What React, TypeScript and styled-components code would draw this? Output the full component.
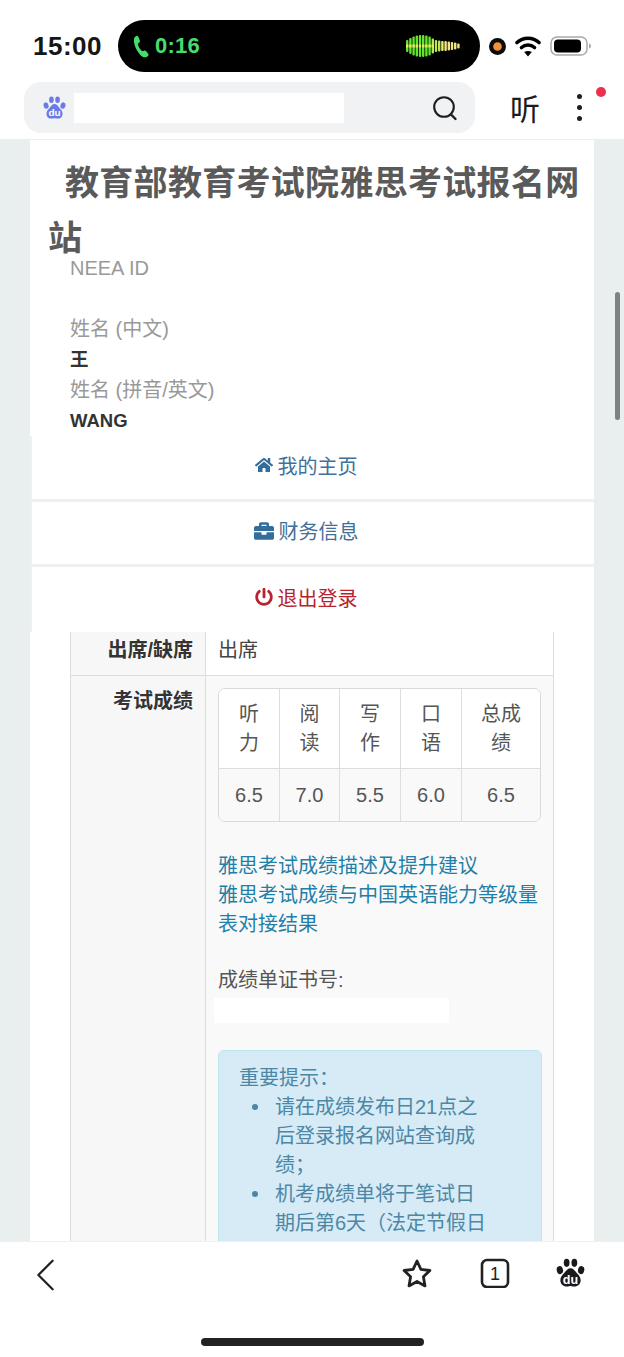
import React from "react";
import styled, { createGlobalStyle } from "styled-components";
import { FaBriefcase, FaHome, FaPowerOff } from "react-icons/fa";

const Global = createGlobalStyle`
  html, body { margin: 0; padding: 0; background: #fff; }
  * { box-sizing: border-box; }
  body { font-family: "Liberation Sans", "Noto Sans CJK SC", sans-serif; }
`;

const Phone = styled.div`
  position: relative;
  width: 624px;
  height: 1357px;
  display: flex;
  flex-direction: column;
  overflow: hidden;
  background: #fff;
`;

const StatusBar = styled.div`
  height: 82px;
  flex: none;
  display: flex;
  align-items: flex-start;
  padding: 20px 0 0 33px;
`;
const Clock = styled.div`
  width: 85px;
  height: 52px;
  line-height: 52px;
  font-size: 26px;
  font-weight: 700;
  color: #161616;
  letter-spacing: 0.5px;
`;
const Island = styled.div`
  width: 362px;
  height: 52px;
  border-radius: 26px;
  background: #000;
  display: flex;
  align-items: center;
  padding: 0 19px 0 15px;
  gap: 2px;
`;
const CallTime = styled.span`
  flex: 1;
  color: #46dd6c;
  font-size: 22px;
  font-weight: 700;
  letter-spacing: 0.2px;
`;
const StatusIcons = styled.div`
  height: 52px;
  display: flex;
  align-items: center;
  margin-left: 9px;
  gap: 9px;
`;

const Toolbar = styled.div`
  height: 57px;
  flex: none;
  display: flex;
  position: relative;
  padding: 0 0 6px 24px;
`;
const SearchBar = styled.div`
  width: 451px;
  height: 51px;
  border-radius: 17px;
  background: #f1f2f4;
  display: flex;
  align-items: center;
  padding: 0 17px 0 19px;
`;
const UrlMask = styled.div`
  width: 270px;
  height: 30px;
  margin-left: 8px;
  margin-right: auto;
  background: #fff;
`;
const Listen = styled.div`
  margin-left: 33px;
  width: 34px;
  height: 51px;
  padding-top: 2px;
  line-height: 51px;
  font-size: 30px;
  color: #1c1c1c;
  text-align: center;
`;
const Dots = styled.div`
  margin-left: 35px;
  height: 51px;
  display: flex;
  flex-direction: column;
  justify-content: center;
  gap: 6px;
`;
const Dot = styled.span`
  width: 5px;
  height: 5px;
  border-radius: 50%;
  background: #1f1f1f;
`;
const RedDot = styled.span`
  position: absolute;
  left: 596px;
  top: 5px;
  width: 10px;
  height: 10px;
  border-radius: 50%;
  background: #ee2f4c;
`;

const Viewport = styled.div`
  flex: 1;
  min-height: 0;
  overflow: hidden;
  background: #e8efee;
  padding: 1px 30px 0;
`;
const Card = styled.div`
  width: 564px;
  background: #fff;
`;
const Heading = styled.h1`
  margin: 0 0 -13px;
  padding: 16px 12px 0 18px;
  text-indent: 17px;
  font-size: 34px;
  line-height: 55px;
  letter-spacing: 0.3px;
  font-weight: 700;
  color: #5a5a5a;
`;
const Info = styled.div`
  padding-left: 40px;
  position: relative;
`;
const Label = styled.div`
  height: 30px;
  line-height: 30px;
  font-size: 20px;
  color: #999;
`;
const Value = styled.div`
  height: 31px;
  line-height: 31px;
  font-size: 18.5px;
  font-weight: 700;
  color: #333;
`;

const NavGroup = styled.div`
  display: flex;
  flex-direction: column;
  gap: 3px;
  padding-left: 2px;
  background: #eef1f2;
`;
const NavItem = styled.a<{ $tone: string; $h: number }>`
  height: ${(p) => p.$h}px;
  background: #fff;
  display: flex;
  align-items: center;
  justify-content: center;
  gap: 5px;
  padding: 0 14px 5px 0;
  font-size: 20px;
  color: ${(p) => p.$tone};
`;

const TableWrap = styled.div`
  padding: 0 40px;
`;
const Row = styled.div`
  display: flex;
  border: 1px solid #ddd;
  border-top: none;
`;
const RowHead = styled.div<{ $pad: number }>`
  width: 135px;
  flex: none;
  background: #f7f7f7;
  border-right: 1px solid #ddd;
  padding: ${(p) => p.$pad}px 12px 10px 0;
  text-align: right;
  font-size: 20px;
  line-height: 29px;
  font-weight: 700;
  color: #333;
`;
const RowBody = styled.div<{ $pad: number; $bg: string }>`
  flex: 1;
  min-width: 0;
  background: ${(p) => p.$bg};
  padding: ${(p) => p.$pad}px 11px 0 12px;
  font-size: 20px;
  line-height: 29px;
  color: #444;
`;

const ScoreTable = styled.table`
  width: 323px;
  border-collapse: separate;
  border-spacing: 0;
  table-layout: fixed;
  font-size: 20px;
  line-height: 29px;
  color: #555;
  border: 1px solid #d9d9d9;
  border-radius: 7px;
  overflow: hidden;
`;
const HeadCell = styled.th<{ $w: number }>`
  width: ${(p) => p.$w}px;
  height: 80px;
  font-weight: 400;
  text-align: center;
  background: #fff;
  border-right: 1px solid #ddd;
  border-bottom: 1px solid #ddd;
  padding: 0;
  &:last-child { border-right: none; }
`;
const ScoreCell = styled.td`
  height: 52px;
  text-align: center;
  background: #f9f9f9;
  border-right: 1px solid #ddd;
  padding: 0;
  &:last-child { border-right: none; }
`;
const Links = styled.div`
  margin-top: 30px;
  color: #1f7fa8;
`;
const CertLabel = styled.div`
  margin-top: 27px;
  color: #555;
`;
const CertMask = styled.div`
  width: 235px;
  height: 25px;
  margin: 3px 0 0 -4px;
  background: #fff;
`;
const Alert = styled.div`
  margin-top: 27px;
  width: 324px;
  background: #d6ebf5;
  border: 1px solid #bfe3ef;
  border-radius: 6px;
  padding: 12px 20px 20px;
  color: #4d87a6;
  font-size: 20px;
`;
const AlertTitle = styled.div`
  padding-top: 1px;
`;
const Bullets = styled.ul`
  margin: 0;
  padding: 0 0 0 36px;
  max-width: 251px;
  list-style: none;
`;
const Bullet = styled.li`
  position: relative;
  &::before {
    content: "";
    position: absolute;
    left: -23px;
    top: 11px;
    width: 6px;
    height: 6px;
    border-radius: 50%;
    background: #4d87a6;
  }
`;

const ScrollThumb = styled.div`
  position: absolute;
  left: 615px;
  top: 292px;
  width: 5px;
  height: 128px;
  border-radius: 3px;
  background: #7d8384;
`;

const BottomBar = styled.div`
  height: 116px;
  flex: none;
  background: #fff;
  border-top: 1px solid #f0f0f0;
  display: flex;
  flex-direction: column;
`;
const BottomIcons = styled.div`
  display: flex;
  align-items: flex-start;
  padding: 16px 39px 0 36px;
  height: 96px;
`;
const IconSlot = styled.div<{ $ml: number }>`
  margin-left: ${(p) => p.$ml}px;
  display: flex;
`;
const HomeBar = styled.div`
  width: 223px;
  height: 8px;
  margin: 0 auto;
  border-radius: 4px;
  background: #222;
`;

function BaiduPaw({ color, textColor, size }: { color: string; textColor: string; size: number }) {
  return (
    <svg width={size} height={size} viewBox="0 0 30 30" aria-hidden="true">
      <ellipse cx="11" cy="5" rx="3" ry="4.2" fill={color} />
      <ellipse cx="19" cy="5" rx="3" ry="4.2" fill={color} />
      <ellipse cx="4" cy="12.500" rx="3.200" ry="4.200" fill={color} transform="rotate(-15 4 12.500)" />
      <ellipse cx="26" cy="12.500" rx="3.200" ry="4.200" fill={color} transform="rotate(15 26 12.500)" />
      <path
        d="M15 10.500c3 0 4.500 2.500 6.500 5 2 2.300 4 4 4 7.500 0 4-3 6.500-6.500 6.500-1.800 0-3.500-.6-4-.6s-2.200.6-4 .6c-3.500 0-6.500-2.500-6.500-6.500 0-3.500 2-5.200 4-7.500 2-2.500 3.500-5 6.500-5z"
        fill={color}
      />
      <text x="15" y="26.500" textAnchor="middle" fontSize="13" fontWeight="700" fontFamily="Liberation Sans, sans-serif" fill={textColor}>
        du
      </text>
    </svg>
  );
}

function PhoneGlyph() {
  return (
    <svg width="20" height="24" viewBox="0 0 20 24" aria-hidden="true">
      <path
        d="M1.500 3.500C2.700 1.800 4.800 1.500 5.500 3l1.300 3.500c.4 1-.2 1.800-1 2.400l-.9.700c-.2 2 2.500 6.800 4.600 7.600l1.200-.5c1-.4 1.900-.3 2.500.5l2 2.600c.8 1.200 0 2.500-1.600 3.200-3 1.200-6-1-8.500-5C1.800 13.500-.2 7 1.500 3.500z"
        fill="#46dd6c"
      />
    </svg>
  );
}

const waveHeights = [12, 16, 19, 21, 22, 22, 21, 19, 15, 12, 11, 10, 10, 9, 8, 7, 5];
function Wave() {
  return (
    <svg width="56" height="26" viewBox="0 0 56 26" aria-hidden="true">
      {waveHeights.map((h, i) => (
        <g key={i}>
          <rect
            x={1 + i * 3.2}
            y={13 - h / 2}
            width="2.400"
            height={h}
            rx="1"
            fill={i < 8 ? "#63e52c" : i < 11 ? "#b8ea4e" : "#f2e67e"}
          />
          {i < 9 && <rect x={1 + i * 3.2} y={11.500} width="2.400" height="3" fill="#e4ee5c" />}
        </g>
      ))}
    </svg>
  );
}

function RecordDot() {
  return (
    <svg width="17" height="17" viewBox="0 0 17 17" aria-hidden="true">
      <circle cx="8.500" cy="8.500" r="8.500" fill="#0b0b0b" />
      <circle cx="8.500" cy="8.500" r="4.300" fill="#f0913a" />
    </svg>
  );
}

function Wifi() {
  return (
    <svg width="26" height="22" viewBox="0 0 26 22" aria-hidden="true">
      <path d="M2 7.500C8 1.800 18 1.800 24 7.500" fill="none" stroke="#000" strokeWidth="3.600" strokeLinecap="round" />
      <path d="M6.500 12.500c3.800-3.300 9.200-3.300 13 0" fill="none" stroke="#000" strokeWidth="3.600" strokeLinecap="round" />
      <path d="M13 21.500l-3.800-4.400c2.200-1.500 5.400-1.500 7.600 0z" fill="#000" />
    </svg>
  );
}

function Battery() {
  return (
    <svg width="42" height="20" viewBox="0 0 42 20" aria-hidden="true">
      <rect x="1" y="1" width="36" height="18" rx="6" fill="#fff" stroke="#a9a9a9" strokeWidth="1.500" />
      <rect x="4" y="3.500" width="27" height="13" rx="4" fill="#000" />
      <path d="M39 7.500c1.500.4 2 1.300 2 2.500s-.5 2.100-2 2.500z" fill="#a9a9a9" />
    </svg>
  );
}

function Magnifier() {
  return (
    <svg width="26" height="26" viewBox="0 0 26 26" aria-hidden="true">
      <circle cx="12" cy="12" r="9.800" fill="none" stroke="#1e1e1e" strokeWidth="2.100" />
      <path d="M19 19.500l4.500 4.500" stroke="#1e1e1e" strokeWidth="2.400" strokeLinecap="round" />
    </svg>
  );
}

function BackChevron() {
  return (
    <svg width="20" height="34" viewBox="0 0 20 34" aria-hidden="true">
      <path d="M17.500 2L2.500 17l15 15" fill="none" stroke="#222" strokeWidth="2.400" strokeLinecap="round" strokeLinejoin="round" />
    </svg>
  );
}

function StarOutline() {
  return (
    <svg width="32" height="32" viewBox="0 0 32 32" aria-hidden="true">
      <path
        d="M16 3l3.900 8.300 9 1.200-6.500 6.300 1.600 9.100-8-4.400-8 4.400 1.600-9.100L3.100 12.500l9-1.200z"
        fill="none"
        stroke="#222"
        strokeWidth="2.800"
        strokeLinejoin="round"
      />
    </svg>
  );
}

function TabCount() {
  return (
    <svg width="30" height="30" viewBox="0 0 30 30" aria-hidden="true">
      <rect x="2" y="2" width="26" height="27" rx="5" fill="none" stroke="#222" strokeWidth="2.600" />
      <text x="15" y="22" textAnchor="middle" fontSize="18" fontFamily="Liberation Sans, sans-serif" fill="#222">
        1
      </text>
    </svg>
  );
}

const columns = [
  { w: 61, a: "听", b: "力", v: "6.5" },
  { w: 60, a: "阅", b: "读", v: "7.0" },
  { w: 61, a: "写", b: "作", v: "5.5" },
  { w: 61, a: "口", b: "语", v: "6.0" },
  { w: 78, a: "总成", b: "绩", v: "6.5" },
];

export default function App() {
  return (
    <Phone>
      <Global />
      <StatusBar>
        <Clock>15:00</Clock>
        <Island>
          <PhoneGlyph />
          <CallTime>0:16</CallTime>
          <Wave />
        </Island>
        <StatusIcons>
          <RecordDot />
          <Wifi />
          <Battery />
        </StatusIcons>
      </StatusBar>

      <Toolbar>
        <SearchBar>
          <BaiduPaw color="#6b7be6" textColor="#fff" size={23} />
          <UrlMask />
          <Magnifier />
        </SearchBar>
        <Listen>听</Listen>
        <Dots>
          <Dot />
          <Dot />
          <Dot />
        </Dots>
        <RedDot />
      </Toolbar>

      <Viewport>
        <Card>
          <Heading>教育部教育考试院雅思考试报名网站</Heading>
          <Info>
            <Label>NEEA ID</Label>
            <Value />
            <Label>姓名 (中文)</Label>
            <Value>王</Value>
            <Label>姓名 (拼音/英文)</Label>
            <Value>WANG</Value>
          </Info>
          <NavGroup>
            <NavItem $tone="#3f7099" $h={63}>
              <FaHome size={18} color="#336d9c" />
              我的主页
            </NavItem>
            <NavItem $tone="#3f7099" $h={62}>
              <FaBriefcase size={20} color="#336d9c" />
              财务信息
            </NavItem>
            <NavItem $tone="#b8232f" $h={65}>
              <FaPowerOff size={18} color="#b8232f" />
              退出登录
            </NavItem>
          </NavGroup>
          <TableWrap>
            <Row>
              <RowHead $pad={4}>出席/缺席</RowHead>
              <RowBody $pad={4} $bg="#fff">出席</RowBody>
            </Row>
            <Row>
              <RowHead $pad={11}>考试成绩</RowHead>
              <RowBody $pad={12} $bg="#f9f9f9">
                <ScoreTable>
                  <thead>
                    <tr>
                      {columns.map((c) => (
                        <HeadCell key={c.v + c.a} $w={c.w}>
                          {c.a}
                          <br />
                          {c.b}
                        </HeadCell>
                      ))}
                    </tr>
                  </thead>
                  <tbody>
                    <tr>
                      {columns.map((c) => (
                        <ScoreCell key={c.v + c.a}>{c.v}</ScoreCell>
                      ))}
                    </tr>
                  </tbody>
                </ScoreTable>
                <Links>
                  雅思考试成绩描述及提升建议
                  <br />
                  雅思考试成绩与中国英语能力等级量表对接结果
                </Links>
                <CertLabel>成绩单证书号:</CertLabel>
                <CertMask />
                <Alert>
                  <AlertTitle>重要提示：</AlertTitle>
                  <Bullets>
                    <Bullet>请在成绩发布日21点之后登录报名网站查询成绩；</Bullet>
                    <Bullet>机考成绩单将于笔试日期后第6天（法定节假日</Bullet>
                  </Bullets>
                </Alert>
              </RowBody>
            </Row>
          </TableWrap>
        </Card>
      </Viewport>

      <BottomBar>
        <BottomIcons>
          <BackChevron />
          <IconSlot $ml={346}>
            <StarOutline />
          </IconSlot>
          <IconSlot $ml={47}>
            <TabCount />
          </IconSlot>
          <IconSlot $ml={46}>
            <BaiduPaw color="#1a1a1a" textColor="#fff" size={29} />
          </IconSlot>
        </BottomIcons>
        <HomeBar />
      </BottomBar>
      <ScrollThumb />
    </Phone>
  );
}
